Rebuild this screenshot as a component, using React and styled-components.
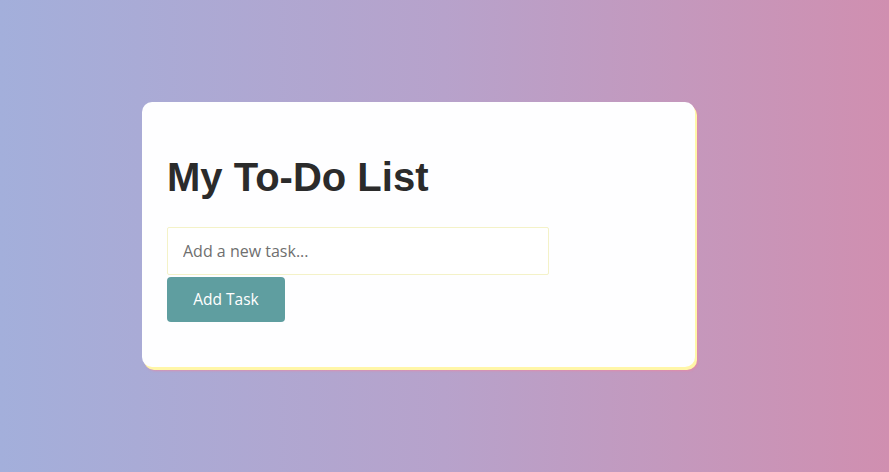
import { useState } from "react";
import styled, { createGlobalStyle } from "styled-components";

const GlobalStyle = createGlobalStyle`
    html, body {
        margin: 0;
        padding: 0;
    }
    body {
        font-family: "Open Sans", "DejaVu Sans", sans-serif;
    }
`

const Page = styled.div`
    width: 889px;
    height: 472px;
    box-sizing: border-box;
    padding: 102px 0 0 142px;
    background: linear-gradient(to right, #a3afdb 0%, #b7a2cb 50%, #d08fb0 100%);
    overflow: hidden;
`
const Card = styled.div`
    width: 553px;
    height: 265px;
    box-sizing: border-box;
    padding: 25px;
    background-color: #fefeff;
    border-radius: 10px;
    box-shadow: 2px 3px 0 #fff6a8, 3px 4px 2px rgba(240, 130, 160, 0.6);
`
const Title = styled.h1`
    margin: 0.67em 0;
    font-family: "Liberation Sans", Arial, sans-serif;
    font-size: 40px;
    font-weight: bold;
    line-height: 1.15;
    color: #2b2b2b;
`
const Input = styled.input`
    display: block;
    width: 382px;
    height: 48px;
    box-sizing: border-box;
    padding: 0 15px;
    margin: 0 0 2px;
    border: 1px solid #f4f2c8;
    border-radius: 2px;
    background: #fff;
    font-family: "Open Sans", "DejaVu Sans", sans-serif;
    font-size: 16px;
    color: #333;
    outline: none;
    &::placeholder {
        color: #6f6f6f;
    }
`
const Button = styled.button`
    display: block;
    width: 118px;
    height: 45px;
    border: none;
    border-radius: 4px;
    background-color: #5f9ea0;
    color: #fff;
    font-family: "Open Sans", "DejaVu Sans", sans-serif;
    font-size: 15.5px;
    cursor: pointer;
`
const List = styled.ul`
    margin: 0;
    padding: 0;
    list-style: none;
`

function App() {
    const [tareas, setTareas] = useState([]);
    const [texto, setTexto] = useState("");

    const agregar = () => {
        if (!texto.trim()) return;
        setTareas([...tareas, texto]);
        setTexto("");
    };

    return (
        <>
            <GlobalStyle />
            <Page>
                <Card>
                    <Title>My To-Do List</Title>
                    <Input
                        placeholder="Add a new task..."
                        value={texto}
                        onChange={(e) => setTexto(e.target.value)}
                    />
                    <Button onClick={agregar}>Add Task</Button>
                    <List>
                        {tareas.map((t, i) => <li key={i}>{t}</li>)}
                    </List>
                </Card>
            </Page>
        </>
    )
}

export default App
